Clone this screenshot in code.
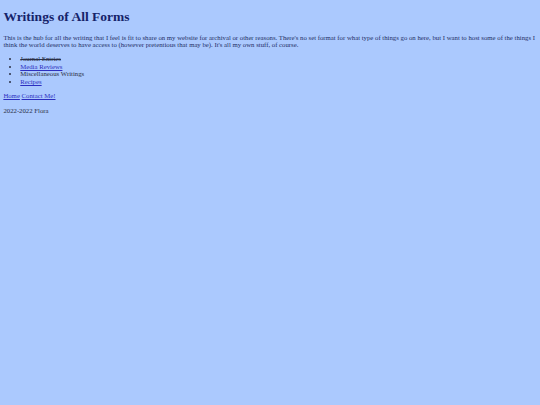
export default function App() {
  return (
    <div
      className="flow-root min-h-screen bg-[#abc9fe] px-[3.375px] pb-[3.375px] text-[6.75px] leading-[normal] text-[#1f2f66]"
      style={{ fontFamily: '"Liberation Serif", "Times New Roman", serif' }}
    >
      <h1 className="mt-[9.05px] mb-[9.05px] text-[13.5px] font-bold text-[#15236a]">Writings of All Forms</h1>
      <p className="my-[6.75px]">
        This is the hub for all the writing that I feel is fit to share on my website for archival or other
        reasons. There's no set format for what type of things go on here, but I want to host some of the things I
        think the world deserves to have access to (however pretentious that may be). It's all my own stuff, of
        course.
      </p>
      <ul className="my-[6.5px] list-disc pl-[16.875px] leading-[7.7px] text-[#2a2f45]">
        <li className="line-through">Journal Entries</li>
        <li>
          <a href="#" className="text-[#2c2fc0] underline">Media Reviews</a>
        </li>
        <li>Miscellaneous Writings</li>
        <li>
          <a href="#" className="text-[#2c2fc0] underline">Recipes</a>
        </li>
      </ul>
      <p className="my-[6.75px] leading-[7.7px]">
        <a href="#" className="text-[#2c2fc0] underline">Home</a>{' '}
        <a href="#" className="text-[#2c2fc0] underline">Contact Me!</a>
      </p>
      <p className="my-[6.75px] leading-[7.7px] text-[#2a2f45]">2022-2022 Flora</p>
    </div>
  )
}
